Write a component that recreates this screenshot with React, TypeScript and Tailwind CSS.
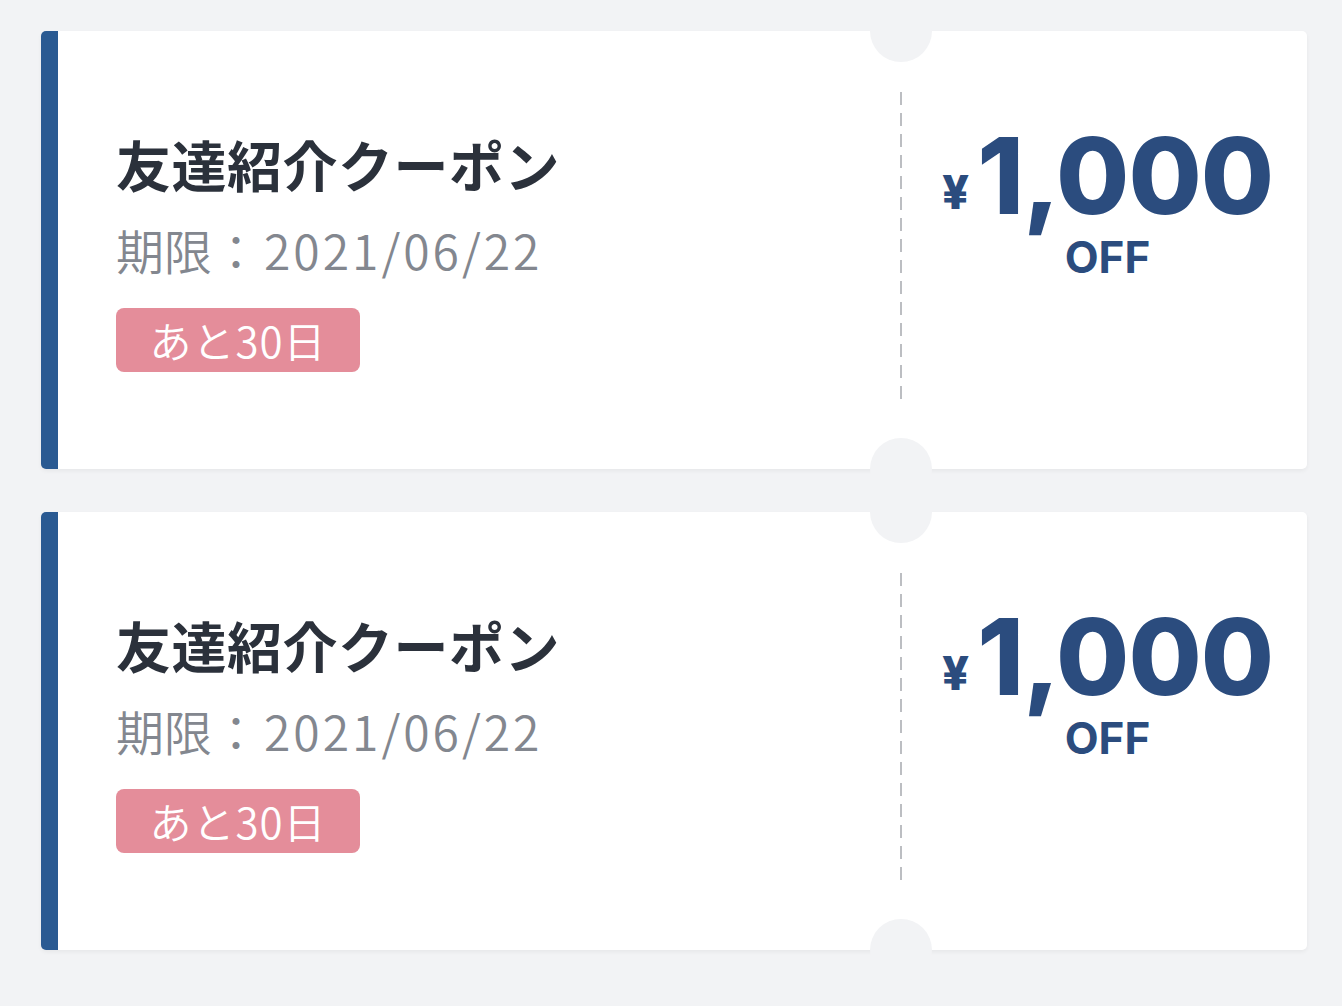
const coupons = [
  { title: "友達紹介クーポン", date: "2021/06/22", left: "あと30日", amount: "1,000" },
  { title: "友達紹介クーポン", date: "2021/06/22", left: "あと30日", amount: "1,000" },
];

function Coupon({ title, date, left, amount }: (typeof coupons)[number]) {
  return (
    <div className="flex h-[438px] rounded-[5px] border-l-[17px] border-[#2a5a92] bg-white shadow-[0_2px_4px_rgba(0,0,0,0.05)]">
      <div className="w-[842px] shrink-0 pl-[58px] pt-[104px] font-['Noto_Sans_CJK_JP',sans-serif]">
        <h2 className="text-[55px] font-bold leading-[56px] tracking-[0.5px] text-[#2b313b]">{title}</h2>
        <p className="mt-[33px] text-[48px] font-[350] leading-[50px] text-[#83878f]">
          期限：<span className="ml-[4px] tracking-[3px]">{date}</span>
        </p>
        <div className="mt-[34px] flex h-[64px] w-[244px] items-center justify-center rounded-[8px] bg-[#e48d9a] text-[42px] font-[350] leading-none tracking-[1px] text-white">
          {left}
        </div>
      </div>

      {/* perforation: notches top and bottom, dashed line between */}
      <div className="relative w-[2px] shrink-0">
        <div className="absolute -top-[31px] left-1/2 h-[62px] w-[62px] -translate-x-1/2 rounded-full bg-[#f2f3f5]" />
        <div className="mt-[61px] h-[310px] w-[2px] bg-[repeating-linear-gradient(to_bottom,#bcbec2_0_13px,transparent_13px_21px)]" />
        <div className="absolute -bottom-[31px] left-1/2 h-[62px] w-[62px] -translate-x-1/2 rounded-full bg-[#f2f3f5]" />
      </div>

      <div className="flex flex-1 flex-col items-center pl-[6px] pt-[105px] font-['Inter',sans-serif] text-[#2b4c7e]">
        <div className="flex items-baseline whitespace-nowrap">
          <span className="relative -top-[5px] mr-[8px] text-[47px] font-extrabold leading-[44px]">¥</span>
          <span className="text-[106px] font-extrabold leading-[80px] tracking-[-1px]">{amount}</span>
        </div>
        <div className="mt-[16px] text-[44px] font-bold leading-[44px]">OFF</div>
      </div>
    </div>
  );
}

export default function App() {
  return (
    <div className="flex min-h-screen flex-col gap-[43px] bg-[#f2f3f5] pb-[40px] pl-[41px] pr-[35px] pt-[31px]">
      {coupons.map((c, i) => (
        <Coupon key={i} {...c} />
      ))}
    </div>
  );
}
